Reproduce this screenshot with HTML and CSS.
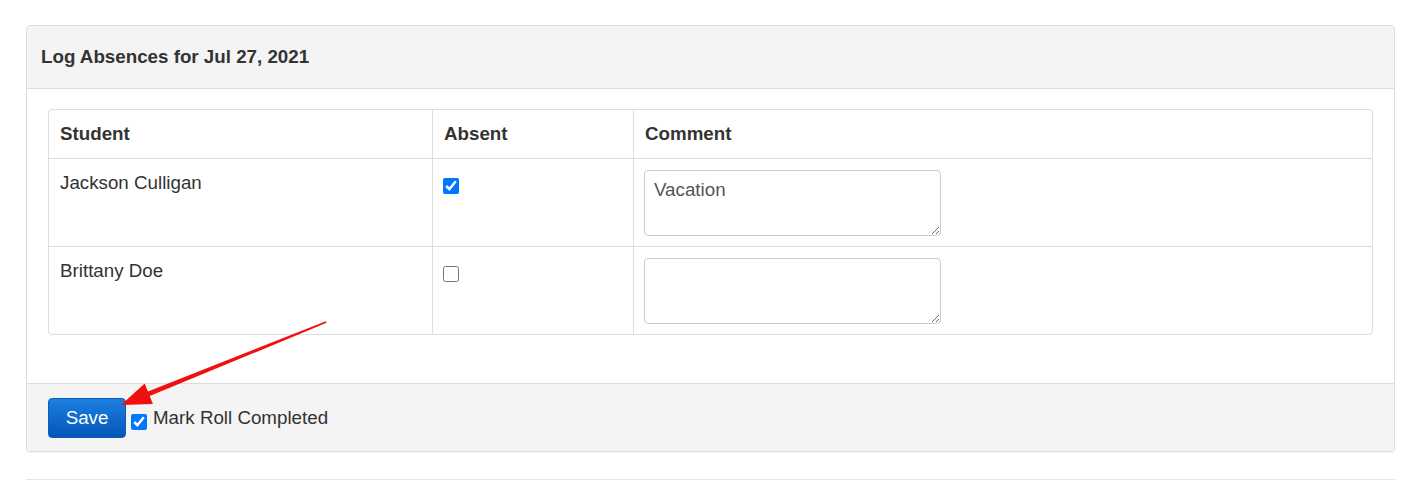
FILE: index.html
```html
<!DOCTYPE html>
<html>
<head>
<meta charset="utf-8">
<title>Log Absences</title>
<link rel="stylesheet" href="styles.css">
</head>
<body>
<div class="page">
  <div class="panel">
    <div class="panel-heading">Log Absences for Jul 27, 2021</div>
    <div class="panel-body">
      <table class="grid">
        <colgroup>
          <col class="c-student">
          <col class="c-absent">
          <col>
        </colgroup>
        <thead>
          <tr>
            <th>Student</th>
            <th>Absent</th>
            <th>Comment</th>
          </tr>
        </thead>
        <tbody>
          <tr>
            <td>Jackson Culligan</td>
            <td><input type="checkbox" class="chk" checked></td>
            <td><textarea class="comment">Vacation</textarea></td>
          </tr>
          <tr>
            <td>Brittany Doe</td>
            <td><input type="checkbox" class="chk"></td>
            <td><textarea class="comment"></textarea></td>
          </tr>
        </tbody>
      </table>
    </div>
    <div class="panel-footer">
      <button class="btn-save">Save</button>
      <label class="mark"><input type="checkbox" class="chk chk-mark" checked><span>Mark Roll Completed</span></label>
    </div>
  </div>
  <div class="rule"></div>
  <svg class="annot" width="1413" height="480" viewBox="0 0 1413 480">
    <polygon fill="#f01010" points="325.8,321.2 147.9,391.4 144.7,383.5 121,405 152.9,404 149.7,396.1 326.6,322.8"/>
  </svg>
</div>
</body>
</html>
```

FILE: styles.css
```css
html, body {
  margin: 0;
  padding: 0;
  background: #fff;
}
body {
  font-family: "Liberation Sans", Arial, sans-serif;
  font-size: 18.75px;
  color: #333;
}
.page {
  position: relative;
  width: 1413px;
  height: 480px;
  overflow: hidden;
  padding-top: 25px;
  box-sizing: border-box;
}
.panel {
  margin-left: 26px;
  width: 1369px;
  box-sizing: border-box;
  border: 1px solid #dcdcdc;
  border-radius: 4px;
  box-shadow: 0 1px 1px rgba(0,0,0,0.05);
  background: #fff;
}
.panel-heading {
  height: 63px;
  box-sizing: border-box;
  display: flex;
  align-items: center;
  padding: 0 14px;
  background: #f4f4f4;
  border-bottom: 1px solid #dddddd;
  border-radius: 3px 3px 0 0;
  font-weight: bold;
  font-size: 18.75px;
  color: #333;
}
.panel-body {
  padding: 20px 21px 48px 21px;
}
.grid {
  width: 100%;
  table-layout: fixed;
  border-collapse: separate;
  border-spacing: 0;
  border: 1px solid #dddddd;
  border-radius: 4px;
}
.c-student { width: 383px; }
.c-absent { width: 201px; }
.grid th, .grid td {
  text-align: left;
  vertical-align: top;
  padding: 12px 11px 10px 11px;
  border-left: 1px solid #dddddd;
  line-height: 24px;
}
.grid th:first-child, .grid td:first-child {
  border-left: none;
}
.grid th {
  height: 48px;
  box-sizing: border-box;
  vertical-align: middle;
  padding-top: 0;
  padding-bottom: 0;
  font-weight: bold;
}
.grid td {
  border-top: 1px solid #dddddd;
  height: 88px;
  box-sizing: border-box;
}
.grid td:nth-child(2) {
  padding-left: 10px;
}
.chk {
  width: 16px;
  height: 16px;
  margin: 7px 0 0 0;
  accent-color: #0075ff;
}
.comment {
  display: block;
  width: 297px;
  height: 66px;
  box-sizing: border-box;
  border: 1px solid #cccccc;
  border-radius: 4px;
  padding: 7px 9px;
  font-family: "Liberation Sans", Arial, sans-serif;
  font-size: 18.75px;
  line-height: 24px;
  color: #555;
  resize: both;
  margin: -1px 0 0 -1px;
}
.panel-footer {
  display: flex;
  align-items: center;
  gap: 5px;
  padding: 14px 21px 13px 21px;
  background: #f4f4f4;
  border-top: 1px solid #dddddd;
  border-radius: 0 0 3px 3px;
}
.btn-save {
  width: 78px;
  height: 40px;
  border: 1px solid #0a5cb8;
  border-radius: 4px;
  background: linear-gradient(#1c80e2, #0356b8);
  color: #fff;
  font-family: "Liberation Sans", Arial, sans-serif;
  font-size: 18.75px;
  padding: 0;
}
.mark {
  display: flex;
  align-items: center;
  gap: 6px;
  color: #333;
}
.chk-mark {
  margin: 8px 0 0 0;
}
.rule {
  margin-left: 26px;
  margin-top: 27px;
  width: 1369px;
  border-top: 1px solid #e6e6e6;
}
.annot {
  position: absolute;
  left: 0;
  top: 0;
  pointer-events: none;
}
```
